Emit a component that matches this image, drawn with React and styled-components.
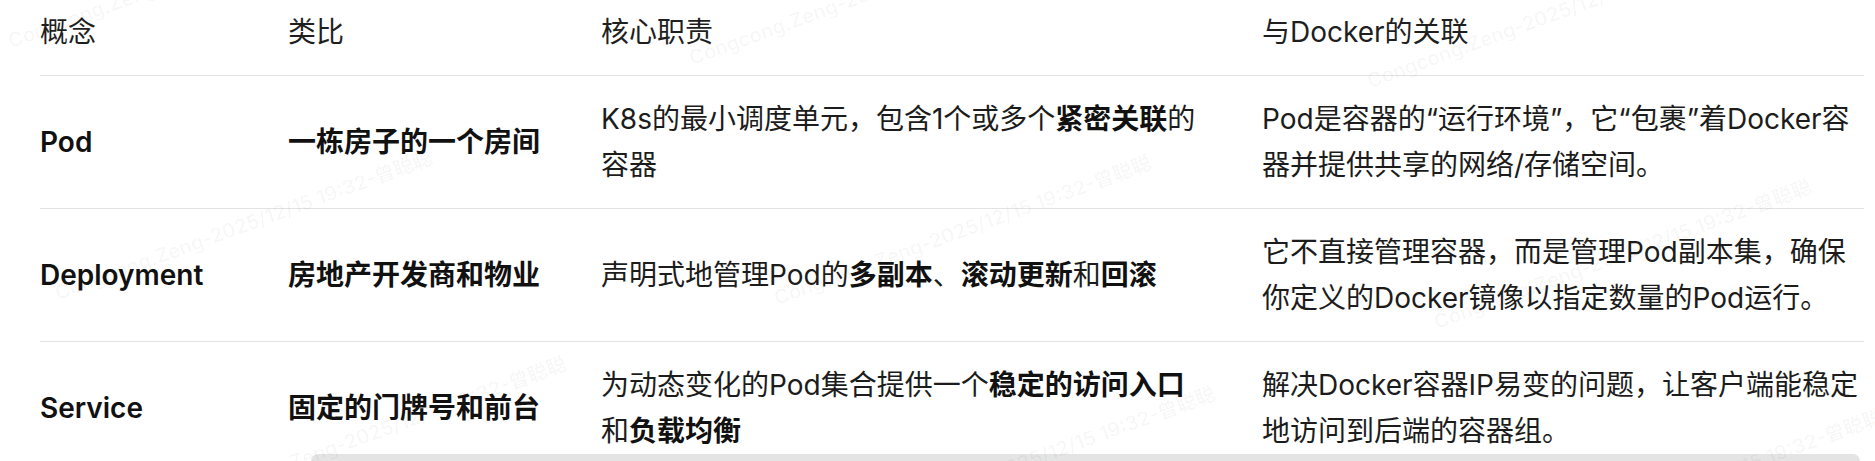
import React from 'react';
import styled, { createGlobalStyle } from 'styled-components';

const GlobalStyle = createGlobalStyle`
  html, body {
    margin: 0;
    padding: 0;
    background: #ffffff;
  }
  body {
    font-family: "Inter", "Noto Sans CJK SC", sans-serif;
    color: #1c1c1c;
  }
`;

const rows = [
  {
    name: 'Pod',
    analogy: '一栋房子的一个房间',
    duty: (
      <>
        K8s的最小调度单元，包含1个或多个<b>紧密关联</b>的容器
      </>
    ),
    docker: 'Pod是容器的“运行环境”，它“包裹”着Docker容器并提供共享的网络/存储空间。',
  },
  {
    name: 'Deployment',
    analogy: '房地产开发商和物业',
    duty: (
      <>
        声明式地管理Pod的<b>多副本</b>、<b>滚动更新</b>和<b>回滚</b>
      </>
    ),
    docker: '它不直接管理容器，而是管理Pod副本集，确保你定义的Docker镜像以指定数量的Pod运行。',
  },
  {
    name: 'Service',
    analogy: '固定的门牌号和前台',
    duty: (
      <>
        为动态变化的Pod集合提供一个<b>稳定的访问入口</b>和<b>负载均衡</b>
      </>
    ),
    docker: '解决Docker容器IP易变的问题，让客户端能稳定地访问到后端的容器组。',
  },
];

// faint diagonal watermark tiles
const marks = [
  [13, 53], [694, 70], [1372, 93],
  [60, 305], [779, 310], [1439, 334],
  [194, 511], [843, 541], [1510, 564],
];

const Page = () => (
  <Screen>
    <GlobalStyle />
    <TableWrap>
      <Table>
        <colgroup>
          <col style={{ width: 248 }} />
          <col style={{ width: 313 }} />
          <col style={{ width: 661 }} />
          <col style={{ width: 602 }} />
        </colgroup>
        <thead>
          <tr>
            <HeadCell>概念</HeadCell>
            <HeadCell>类比</HeadCell>
            <HeadCell>核心职责</HeadCell>
            <HeadCell>与Docker的关联</HeadCell>
          </tr>
        </thead>
        <tbody>
          {rows.map((r) => (
            <tr key={r.name}>
              <NameCell>{r.name}</NameCell>
              <AnalogyCell>{r.analogy}</AnalogyCell>
              <Cell $padRight={56}>{r.duty}</Cell>
              <Cell>{r.docker}</Cell>
            </tr>
          ))}
        </tbody>
      </Table>
    </TableWrap>
    <ScrollThumb />
    <Watermarks>
      {marks.map(([x, y], i) => (
        <Mark key={i} $x={x} $y={y}>
          Congcong.Zeng-2025/12/15 19:32-曾聪聪
        </Mark>
      ))}
    </Watermarks>
  </Screen>
);

const Screen = styled.div`
  position: relative;
  width: 1875px;
  height: 461px;
  overflow: hidden;
  background: #fff;
`;

const TableWrap = styled.div`
  padding-left: 40px;
`;

const Table = styled.table`
  border-collapse: collapse;
  table-layout: fixed;
  width: 1824px;
  font-size: 28px;
  line-height: 46px;
`;

const HeadCell = styled.th`
  text-align: left;
  font-weight: 400;
  color: #1f1f1f;
  padding: 9px 0 20px 0;
  border-bottom: 1px solid #e3e3e3;
  white-space: nowrap;
`;

const Cell = styled.td`
  vertical-align: middle;
  padding: 20px ${(p) => p.$padRight || 0}px 20px 0;
  border-bottom: 1px solid #e3e3e3;
  color: #1c1c1c;

  b {
    font-weight: 700;
    color: #111;
  }
`;

const NameCell = styled(Cell)`
  font-weight: 600;
  color: #111;
`;

const AnalogyCell = styled(Cell)`
  font-weight: 700;
  color: #111;
`;

const ScrollThumb = styled.div`
  position: absolute;
  left: 311px;
  top: 454px;
  width: 1549px;
  height: 14px;
  border-radius: 7px;
  background: #e4e4e4;
`;

const Watermarks = styled.div`
  position: absolute;
  inset: 0;
  pointer-events: none;
  overflow: hidden;
`;

const Mark = styled.span`
  position: absolute;
  left: ${(p) => p.$x}px;
  top: ${(p) => p.$y - 24}px;
  transform: rotate(-20deg);
  transform-origin: left bottom;
  font-size: 20px;
  line-height: 24px;
  font-weight: 600;
  white-space: nowrap;
  color: rgba(0, 0, 0, 0.035);
`;

export default function App() {
  return <Page />;
}
